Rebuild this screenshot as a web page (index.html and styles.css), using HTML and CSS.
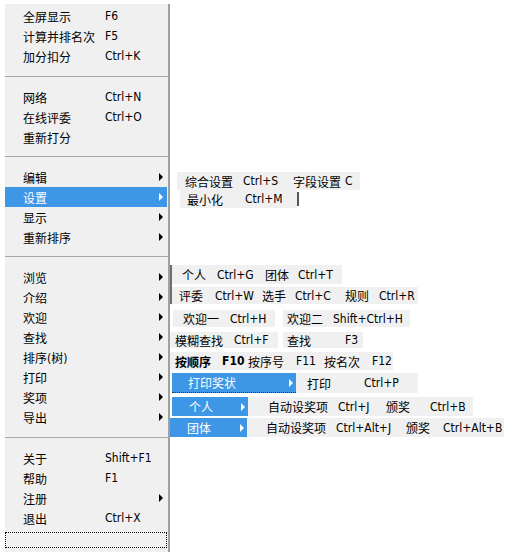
FILE: index.html
```html
<!DOCTYPE html>
<html lang="zh-CN">
  <head>
    <meta charset="utf-8" />
    <title>菜单</title>
    <link rel="stylesheet" href="styles.css">
  </head>
  <body>
    <div class="screen">
      <div class="menu">
        <div class="sec first">
          <div class="item"><span class="label">全屏显示</span><span class="key">F6</span></div>
          <div class="item"><span class="label">计算并排名次</span><span class="key">F5</span></div>
          <div class="item"><span class="label">加分扣分</span><span class="key">Ctrl+K</span></div>
        </div>
        <div class="sec">
          <div class="item"><span class="label">网络</span><span class="key">Ctrl+N</span></div>
          <div class="item"><span class="label">在线评委</span><span class="key">Ctrl+O</span></div>
          <div class="item"><span class="label">重新打分</span><span class="key"></span></div>
        </div>
        <div class="sec plain">
          <div class="item"><span class="label">编辑</span><span class="key"></span><span class="arrow"></span></div>
          <div class="item active"><span class="label">设置</span><span class="key"></span><span class="arrow"></span></div>
          <div class="item"><span class="label">显示</span><span class="key"></span><span class="arrow"></span></div>
          <div class="item"><span class="label">重新排序</span><span class="key"></span><span class="arrow"></span></div>
        </div>
        <div class="sec tall">
          <div class="item"><span class="label">浏览</span><span class="key"></span><span class="arrow"></span></div>
          <div class="item"><span class="label">介绍</span><span class="key"></span><span class="arrow"></span></div>
          <div class="item"><span class="label">欢迎</span><span class="key"></span><span class="arrow"></span></div>
          <div class="item"><span class="label">查找</span><span class="key"></span><span class="arrow"></span></div>
          <div class="item"><span class="label">排序(树)</span><span class="key"></span><span class="arrow"></span></div>
          <div class="item"><span class="label">打印</span><span class="key"></span><span class="arrow"></span></div>
          <div class="item"><span class="label">奖项</span><span class="key"></span><span class="arrow"></span></div>
          <div class="item"><span class="label">导出</span><span class="key"></span><span class="arrow"></span></div>
        </div>
        <div class="sec last">
          <div class="item"><span class="label">关于</span><span class="key">Shift+F1</span></div>
          <div class="item"><span class="label">帮助</span><span class="key">F1</span></div>
          <div class="item"><span class="label">注册</span><span class="key"></span><span class="arrow"></span></div>
          <div class="item"><span class="label">退出</span><span class="key">Ctrl+X</span></div>
          <div class="focus"></div>
        </div>
      </div>

      <div class="subs">
        <div class="frag f1">
          <div class="cell c1"><span class="w58">综合设置</span><span class="w50">Ctrl+S</span><span class="w52">字段设置</span><span>C</span></div>
        </div>
        <div class="frag f2">
          <div class="cell c2"><span class="w58">最小化</span><span>Ctrl+M</span></div>
          <span class="caret"></span>
        </div>

        <div class="group">
          <div class="frag f3">
            <div class="cell c3"><span class="w35">个人</span><span class="w48">Ctrl+G</span><span class="w33">团体</span><span>Ctrl+T</span></div>
          </div>
          <div class="frag f4">
            <div class="cell c4"><span class="w36">评委</span><span class="w47">Ctrl+W</span><span class="w33">选手</span><span class="w50">Ctrl+C</span><span class="w34">规则</span><span>Ctrl+R</span></div>
          </div>
        </div>
        <div class="frag f5">
          <div class="cell c5a"><span class="w47">欢迎一</span><span>Ctrl+H</span></div>
          <div class="cell c5b"><span class="w46">欢迎二</span><span>Shift+Ctrl+H</span></div>
        </div>
        <div class="frag f6">
          <div class="cell c6a"><span class="w59">模糊查找</span><span>Ctrl+F</span></div>
          <div class="cell c6b"><span class="w58">查找</span><span>F3</span></div>
        </div>
        <div class="frag f7">
          <div class="cell c7"><span class="w47 bold">按顺序</span><span class="w26 bold">F10</span><span class="w48">按序号</span><span class="w28">F11</span><span class="w48">按名次</span><span>F12</span></div>
        </div>
        <div class="frag f8">
          <div class="cell sel c8a"><span class="key">打印奖状</span><span class="arrow"></span></div>
          <div class="cell c8b"><span class="w57">打印</span><span>Ctrl+P</span></div>
        </div>
        <div class="frag f9">
          <div class="cell sel c9a"><span class="key">个人</span><span class="arrow"></span></div>
          <div class="cell c9b"><span class="w70">自动设奖项</span><span class="w48">Ctrl+J</span><span class="w44">颁奖</span><span>Ctrl+B</span></div>
        </div>
        <div class="frag f10">
          <div class="cell sel c10a"><span class="key">团体</span><span class="arrow"></span></div>
          <div class="cell c10b"><span class="w70">自动设奖项</span><span class="w70">Ctrl+Alt+J</span><span class="w37">颁奖</span><span>Ctrl+Alt+B</span></div>
        </div>
      </div>
    </div>
  </body>
</html>
```

FILE: styles.css
```css
* {
  box-sizing: border-box;
  font-family: "DejaVu Sans Condensed", "DejaVu Sans", "Noto Sans CJK SC", sans-serif;
}

html, body {
  height: 100%;
  width: 100%;
}

body {
  margin: 0;
  background: #ffffff;
  color: #000000;
  font-size: 12px;
}

.screen {
  display: flex;
  align-items: flex-start;
}

/* main popup menu */
.menu {
  width: 165px;
  margin: 4px 0 0 5px;
  background: #f0f0f0;
  border-right: 2px solid #a0a0a0;
}

.sec {
  padding: 10px 0 9px 0;
  border-top: 1px solid #a8a8a8;
}

.sec.first {
  padding-top: 2px;
  padding-bottom: 10px;
  border-top: none;
}

.sec.tall {
  padding-bottom: 10px;
}

.sec.last {
  padding-bottom: 4px;
}

.item {
  display: flex;
  align-items: center;
  height: 20px;
  padding-left: 18px;
  margin-right: 1px;
}

.item.active {
  background: #3d97e6;
  color: #ffffff;
}

.label {
  width: 82px;
  white-space: nowrap;
}

.key {
  flex: 1;
  white-space: nowrap;
}

.arrow {
  width: 0;
  height: 0;
  border-left: 4px solid #000000;
  border-top: 4px solid transparent;
  border-bottom: 4px solid transparent;
  margin-right: 4px;
}

.active .arrow, .sel .arrow {
  border-left-color: #ffffff;
}

.focus {
  height: 16px;
  margin: 4px 1px 0 0;
  border: 1px dotted #000000;
}

/* submenu strips */
.subs {
  display: flex;
  flex-direction: column;
  align-items: flex-start;
}

.frag {
  display: flex;
  align-items: center;
}

.cell {
  display: flex;
  align-items: center;
  height: 100%;
  background: #f0f0f0;
  white-space: nowrap;
}

.cell span {
  flex-shrink: 0;
}

.cell.sel {
  background: #3d97e6;
  color: #ffffff;
}

.cell.sel .arrow {
  margin-right: 3px;
}

.bold {
  font-weight: 700;
}

.caret {
  width: 2px;
  height: 14px;
  background: #555555;
}

.f1 { margin: 172px 0 0 7px; height: 18px; }
.c1 { width: 183px; padding-left: 8px; }

.f2 { margin-left: 10px; height: 18px; }
.c2 { width: 117px; padding-left: 7px; }

.group {
  display: flex;
  flex-direction: column;
  gap: 3px;
  margin-top: 57px;
  border-left: 2px solid #6e6e6e;
}

.f3 { height: 19px; }
.c3 { width: 170px; padding-left: 10px; }

.f4 { height: 17px; }
.c4 { width: 246px; padding-left: 7px; }

.f5 { margin: 6px 0 0 3px; height: 17px; gap: 8px; }
.c5a { width: 102px; padding-left: 10px; }
.c5b { width: 127px; padding-left: 4px; }

.f6 { margin-top: 5px; height: 16px; gap: 5px; }
.c6a { width: 108px; padding-left: 5px; }
.c6b { width: 80px; padding-left: 4px; }

.f7 { margin-top: 4px; height: 18px; }
.c7 { width: 223px; padding-left: 5px; }

.f8 { margin: 3px 0 0 2px; height: 20px; }
.c8a { width: 124px; padding-left: 16px; border-bottom: 1px dotted #333333; }
.c8b { width: 122px; padding-left: 11px; }

.f9 { margin: 4px 0 0 2px; height: 19px; }
.c9a { width: 76px; padding-left: 17px; }
.c9b { width: 225px; padding-left: 20px; }

.f10 { margin-top: 2px; height: 19px; }
.c10a { width: 77px; padding-left: 17px; }
.c10b { width: 257px; padding-left: 19px; }

.w26 { width: 26px; }
.w28 { width: 28px; }
.w33 { width: 33px; }
.w34 { width: 34px; }
.w35 { width: 35px; }
.w36 { width: 36px; }
.w37 { width: 37px; }
.w44 { width: 44px; }
.w46 { width: 46px; }
.w47 { width: 47px; }
.w48 { width: 48px; }
.w50 { width: 50px; }
.w52 { width: 52px; }
.w57 { width: 57px; }
.w58 { width: 58px; }
.w59 { width: 59px; }
.w70 { width: 70px; }
```
